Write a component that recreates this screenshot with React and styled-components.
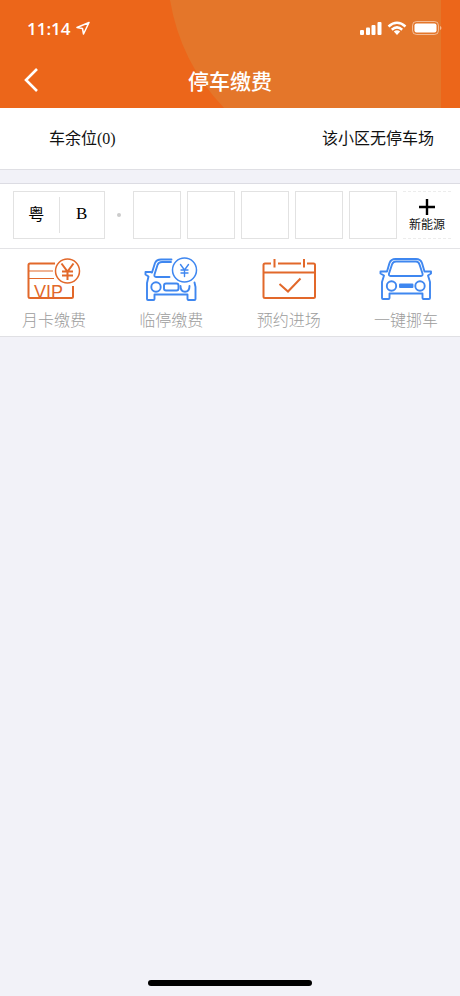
import React, { useState } from "react";
import styled, { createGlobalStyle } from "styled-components";

const ORANGE = "#e2682a";
const BLUE = "#3f87f0";

const MonthCardIcon = () => (
  <svg width="56" height="46" viewBox="0 0 56 46" fill="none" stroke={ORANGE} strokeWidth="2">
    <path d="M29 6.500H4Q2.500 6.500 2.500 8V39.500Q2.500 41 4 41H45.500Q47 41 47 39.500V29" />
    <path d="M3 14H27M3 21.500H28" strokeWidth="1.200" />
    <circle cx="41.500" cy="14" r="12" strokeWidth="1.500" />
    <path d="M35.500 6.500L41.500 14.500L47.500 6.500M41.500 14.500V23M36 14.500H47M36 18.500H47" />
    <text x="8" y="41" fontSize="18" fill={ORANGE} stroke="none">VIP</text>
  </svg>
);

const TempParkIcon = () => (
  <svg width="56" height="46" viewBox="0 0 56 46" fill="none" stroke={BLUE} strokeWidth="1.900" strokeLinejoin="round" strokeLinecap="round">
    <path d="M28.500 2.500H18Q13.500 2.500 12 6L9 15.500L7.500 15H2.500V17.500L5.500 19.500L4 26V42Q4 43 5 43H10.500Q11.500 43 11.500 42V37.500H44.500V42Q44.500 43 45.500 43H51.500Q52.500 43 52.500 42V30L51.500 25.500" />
    <path d="M28 5H19Q15.500 5 14.500 8L11.500 17.500Q11 20 13 20H26.500" />
    <circle cx="13" cy="30" r="4.700" />
    <rect x="21" y="26.500" width="14.500" height="7" rx="2" />
    <path d="M37.500 29Q37.500 34.700 42 34.700Q46.500 34.700 46.500 29" />
    <circle cx="41.500" cy="13" r="12" strokeWidth="1.500" />
    <path d="M37.500 7.500L41.500 13L45.500 7.500M41.500 13V19.500M38 13H45M38 16H45" strokeWidth="1.400" />
  </svg>
);

const BookingIcon = () => (
  <svg width="56" height="46" viewBox="0 0 56 46" fill="none" stroke={ORANGE} strokeWidth="2">
    <path d="M10 6.500H4Q2.500 6.500 2.500 8V39.500Q2.500 41 4 41H52.500Q54 41 54 39.500V8Q54 6.500 52.500 6.500H46M17 6.500H40M3 15.500H54" />
    <path d="M13.500 2V10.500M43 2V10.500M18.500 27L27 34.500L39.500 21.500" />
  </svg>
);

const MoveCarIcon = () => (
  <svg width="56" height="46" viewBox="0 0 56 46" fill="none" stroke={BLUE} strokeWidth="1.900" strokeLinejoin="round" strokeLinecap="round">
    <path d="M9 14.500L11.500 6Q13 2 17.500 2H38Q42.500 2 44 6L46.500 14.500H53V16.500L50 18.500L52 25V41Q52 42 51 42H45.500Q44.500 42 44.500 41V36.500H11.500V41Q11.500 42 10.500 42H5Q4 42 4 41V25L6 18.500L2.500 16.500V14.500Z" />
    <path d="M14 7.500L11 16.500Q10.500 19 12.500 19H43Q45 19 44.500 16.500L41.500 7.500Q40.500 4.500 38 4.500H18Q15 4.500 14 7.500Z" />
    <circle cx="13.500" cy="29" r="4.700" />
    <circle cx="42" cy="29" r="4.700" />
    <rect x="22" y="27.500" width="12.500" height="2.500" fill={BLUE} />
  </svg>
);

const services = [
  { label: "月卡缴费", Icon: MonthCardIcon },
  { label: "临停缴费", Icon: TempParkIcon },
  { label: "预约进场", Icon: BookingIcon },
  { label: "一键挪车", Icon: MoveCarIcon },
];

const App = () => {
  const [plate, setPlate] = useState(["", "", "", "", ""]);

  const handlePlateChange = (index, value) => {
    setPlate(plate.map((char, i) => (i === index ? value.toUpperCase() : char)));
  };

  return (
    <Page>
      <GlobalStyle />
      <Header>
        <HeaderArt viewBox="0 0 460 108" preserveAspectRatio="none" aria-hidden="true">
          <path d="M170 0A206 206 0 0 0 224 108H441V0Z" fill="#e4762a" />
        </HeaderArt>
        <StatusBar>
          <StatusGroup>
            <Time>11:14</Time>
            <svg width="14" height="14" viewBox="0 0 14 14" fill="none" stroke="#fff" strokeWidth="1.500" strokeLinejoin="round">
              <path d="M13 1.500L1 6.500L6.500 7.500L7.500 13Z" />
            </svg>
          </StatusGroup>
          <StatusGroup>
            <svg width="22" height="14" viewBox="0 0 22 14" fill="#fff">
              <rect x="0" y="9" width="4" height="5" rx="1" />
              <rect x="6" y="6.500" width="4" height="7.500" rx="1" />
              <rect x="11.500" y="4" width="4" height="10" rx="1" />
              <rect x="17.500" y="1" width="4" height="13" rx="1" />
            </svg>
            <svg width="20" height="14" viewBox="0 0 20 14" fill="none" stroke="#fff" strokeWidth="2.500">
              <path d="M1.500 5.500Q10 -2 18.500 5.500" />
              <path d="M4.800 8.700Q10 4 15.200 8.700" />
              <path d="M10 14L6.800 10.600Q10 8 13.200 10.600Z" fill="#fff" stroke="none" />
            </svg>
            <svg width="30" height="14" viewBox="0 0 30 14" fill="none">
              <rect x="0.500" y="0.500" width="26" height="13" rx="4" stroke="#fff" strokeOpacity="0.5" />
              <rect x="2.500" y="2.500" width="22" height="9" rx="2" fill="#fff" />
              <path d="M28 5V9Q29.500 8.500 29.500 7Q29.500 5.500 28 5Z" fill="#fff" fillOpacity="0.5" />
            </svg>
          </StatusGroup>
        </StatusBar>
        <NavBar>
          <BackButton type="button" aria-label="返回">
            <svg width="16" height="26" viewBox="0 0 16 26" fill="none" stroke="#fff" strokeWidth="2.600">
              <path d="M14 2L3 13L14 24" />
            </svg>
          </BackButton>
          <Title>停车缴费</Title>
        </NavBar>
      </Header>

      <main>
        <InfoRow>
          <span>车余位(0)</span>
          <span>该小区无停车场</span>
        </InfoRow>

        <PlateRow>
          <RegionBox>
            <RegionButton type="button">粤</RegionButton>
            <RegionButton type="button">B</RegionButton>
          </RegionBox>
          <DotCell>
            <Dot />
          </DotCell>
          <PlateCells>
            {plate.map((char, i) => (
              <PlateInput
                key={i}
                type="text"
                maxLength={1}
                aria-label={`车牌第${i + 3}位`}
                value={char}
                onChange={(e) => handlePlateChange(i, e.target.value)}
              />
            ))}
            <EnergyButton type="button">
              <svg width="16" height="16" viewBox="0 0 16 16" stroke="#000" strokeWidth="2.400">
                <path d="M8 0V16M0 8H16" />
              </svg>
              新能源
            </EnergyButton>
          </PlateCells>
        </PlateRow>

        <ServiceRow>
          {services.map(({ label, Icon }) => (
            <ServiceButton type="button" key={label}>
              <Icon />
              {label}
            </ServiceButton>
          ))}
        </ServiceRow>
      </main>

      <HomeIndicator />
    </Page>
  );
};

const GlobalStyle = createGlobalStyle`
  * {
    box-sizing: border-box;
  }

  body {
    margin: 0;
    background: #f2f2f8;
    font-family: "Liberation Serif", "Noto Sans CJK SC", serif;
    color: #111;
  }

  button,
  input {
    margin: 0;
    padding: 0;
    border: none;
    background: none;
    font: inherit;
    color: inherit;
  }

  button {
    cursor: pointer;
  }

  svg {
    display: block;
    font-family: "Liberation Sans", Arial, sans-serif;
    font-weight: 400;
  }
`;

const Page = styled.div`
  min-height: 100vh;
`;

const Header = styled.header`
  position: relative;
  background: #ec661a;
  color: #fff;
`;

const HeaderArt = styled.svg`
  position: absolute;
  inset: 0;
  width: 100%;
  height: 100%;
`;

const StatusBar = styled.div`
  position: relative;
  display: flex;
  align-items: center;
  justify-content: space-between;
  height: 56px;
  padding: 0 18px 0 27px;
`;

const StatusGroup = styled.div`
  display: flex;
  align-items: center;
  gap: 5px;
`;

const Time = styled.span`
  font-family: "Open Sans", "Liberation Sans", sans-serif;
  font-size: 17px;
  font-weight: 600;
`;

const NavBar = styled.div`
  position: relative;
  display: flex;
  align-items: center;
  justify-content: center;
  height: 52px;
  padding-bottom: 4px;
`;

const BackButton = styled.button`
  position: absolute;
  left: 17px;
  display: flex;
  padding: 6px;
`;

const Title = styled.h1`
  margin: 0;
  font-family: "Noto Sans CJK SC", sans-serif;
  font-size: 21px;
  font-weight: 500;
  line-height: 30px;
`;

const InfoRow = styled.div`
  display: flex;
  align-items: center;
  justify-content: space-between;
  height: 62px;
  padding: 0 26px 4px 49px;
  border-bottom: 1px solid #dfdfe4;
  background: #fff;
  font-size: 16px;
`;

const PlateRow = styled.div`
  display: flex;
  margin-top: 13px;
  padding: 7px 9px 9px 13px;
  border-top: 1px solid #dcdce3;
  border-bottom: 1px solid #e3e3e6;
  background: #fff;
`;

const RegionBox = styled.div`
  display: flex;
  width: 92px;
  height: 48px;
  border: 1px solid #e2e2e2;
`;

const RegionButton = styled.button`
  flex: 1;
  margin: 5px 0;
  padding-bottom: 4px;
  font-size: 16px;
  color: #000;

  & + & {
    padding-bottom: 2px;
    border-left: 1px solid #e2e2e2;
    font-size: 17px;
  }
`;

const DotCell = styled.div`
  display: flex;
  align-items: center;
  justify-content: center;
  width: 28px;
`;

const Dot = styled.span`
  width: 4px;
  height: 4px;
  border-radius: 50%;
  background: #ccc;
`;

const PlateCells = styled.div`
  flex: 1;
  display: grid;
  grid-template-columns: repeat(6, 1fr);
  gap: 6px;
`;

const PlateInput = styled.input`
  width: 100%;
  height: 48px;
  border: 1px solid #e2e2e2;
  border-radius: 0;
  text-align: center;
  outline: none;

  &:focus {
    border-color: ${ORANGE};
  }
`;

const EnergyButton = styled.button`
  display: flex;
  flex-direction: column;
  align-items: center;
  justify-content: center;
  gap: 2px;
  height: 48px;
  padding-top: 2px;
  border-top: 1px dashed #ececec;
  border-bottom: 1px dashed #ececec;
  font-size: 12px;
  line-height: 16px;
  white-space: nowrap;
`;

const ServiceRow = styled.div`
  display: flex;
  justify-content: space-between;
  padding: 8px 22px 3px;
  border-bottom: 1px solid #e0e0e4;
  background: #fff;
`;

const ServiceButton = styled.button`
  display: flex;
  flex-direction: column;
  align-items: center;
  gap: 6px;
  font-size: 16px;
  font-weight: 300;
  line-height: 24px;
  color: #9c9c9c;
`;

const HomeIndicator = styled.div`
  position: fixed;
  bottom: 10px;
  left: 50%;
  width: 164px;
  height: 6px;
  margin-left: -82px;
  border-radius: 3px;
  background: #000;
`;

export default App;
